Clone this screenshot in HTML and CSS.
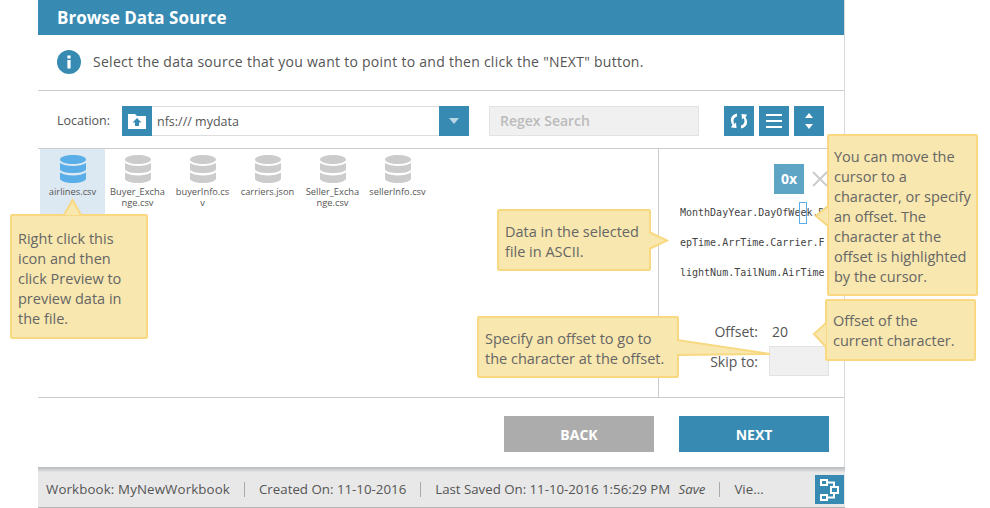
FILE: index.html
```html
<!DOCTYPE html>
<html lang="en">
<head>
<meta charset="utf-8">
<title>Browse Data Source</title>
<link rel="stylesheet" href="styles.css">
</head>
<body>
<div class="panel">
  <header class="title">Browse Data Source</header>
  <div class="intro">
    <svg class="info" viewBox="0 0 24 24" width="24" height="24"><circle cx="12" cy="12" r="12" fill="#378bb3"/><rect x="10.4" y="10" width="3.2" height="8.5" fill="#fff"/><rect x="10.4" y="5.5" width="3.2" height="3" fill="#fff"/></svg>
    <span>Select the data source that you want to point to and then click the "NEXT" button.</span>
  </div>
  <div class="toolbar">
    <span class="loc-label">Location:</span>
    <div class="loc">
      <span class="loc-icon"><svg viewBox="0 0 18 16" width="18" height="16"><path d="M0 1h7l2 2h9v13H0z" fill="#fff"/><path d="M9 5l4.500 4.500H11V13H7V9.500H4.500z" fill="#378bb3"/></svg></span>
      <span class="loc-text">nfs:/// mydata</span>
      <span class="loc-drop"><svg viewBox="0 0 10 6" width="10" height="6"><path d="M0 0h10L5 6z" fill="#b9d6e4"/></svg></span>
    </div>
    <div class="regex">Regex Search</div>
    <div class="tools">
      <span class="tool"><svg viewBox="0 0 20 18" width="20" height="18"><path d="M8 1.500C3.500 2.500 1.500 5.500 2 9c.2 1.500.8 2.500 1.500 3.500L2 15.500l5.500.5-.5-5.500-1.500 1.500C4.500 10.500 4.300 9 4.700 7.500 5.200 6 6.300 5 8 4.500zM12 16.500c4.500-1 6.500-4 6-7.500-.2-1.500-.8-2.500-1.500-3.500L18 2.500 12.500 2l.5 5.500L14.500 6c1 1.500 1.200 3 .8 4.500-.5 1.500-1.600 2.500-3.300 3z" fill="#fff"/></svg></span>
      <span class="tool"><svg viewBox="0 0 16 14" width="16" height="14"><path d="M0 0h16v2H0zM0 6h16v2H0zM0 12h16v2H0z" fill="#fff"/></svg></span>
      <span class="tool"><svg viewBox="0 0 8 16" width="8" height="16"><path d="M4 0l4 5H0zM4 16L0 11h8z" fill="#fff"/></svg></span>
    </div>
  </div>
  <div class="content">
    <div class="files">
      <div class="file selected"><svg class="db" viewBox="0 0 26 28"><path d="M0 4.500C0 2 6 0 13 0s13 2 13 4.500S20 9 13 9 0 7 0 4.500zM0 8c3 2 8 3 13 3s10-1 13-3v6c0 2.500-6 4-13 4S0 16.500 0 14zM0 17.500c3 2 8 3 13 3s10-1 13-3v6C26 26 20 28 13 28S0 26 0 23.500z"/></svg><span>airlines.csv</span></div>
      <div class="file"><svg class="db" viewBox="0 0 26 28"><path d="M0 4.500C0 2 6 0 13 0s13 2 13 4.500S20 9 13 9 0 7 0 4.500zM0 8c3 2 8 3 13 3s10-1 13-3v6c0 2.500-6 4-13 4S0 16.500 0 14zM0 17.500c3 2 8 3 13 3s10-1 13-3v6C26 26 20 28 13 28S0 26 0 23.500z"/></svg><span>Buyer_Excha<br>nge.csv</span></div>
      <div class="file"><svg class="db" viewBox="0 0 26 28"><path d="M0 4.500C0 2 6 0 13 0s13 2 13 4.500S20 9 13 9 0 7 0 4.500zM0 8c3 2 8 3 13 3s10-1 13-3v6c0 2.500-6 4-13 4S0 16.500 0 14zM0 17.500c3 2 8 3 13 3s10-1 13-3v6C26 26 20 28 13 28S0 26 0 23.500z"/></svg><span>buyerInfo.cs<br>v</span></div>
      <div class="file"><svg class="db" viewBox="0 0 26 28"><path d="M0 4.500C0 2 6 0 13 0s13 2 13 4.500S20 9 13 9 0 7 0 4.500zM0 8c3 2 8 3 13 3s10-1 13-3v6c0 2.500-6 4-13 4S0 16.500 0 14zM0 17.500c3 2 8 3 13 3s10-1 13-3v6C26 26 20 28 13 28S0 26 0 23.500z"/></svg><span>carriers.json</span></div>
      <div class="file"><svg class="db" viewBox="0 0 26 28"><path d="M0 4.500C0 2 6 0 13 0s13 2 13 4.500S20 9 13 9 0 7 0 4.500zM0 8c3 2 8 3 13 3s10-1 13-3v6c0 2.500-6 4-13 4S0 16.500 0 14zM0 17.500c3 2 8 3 13 3s10-1 13-3v6C26 26 20 28 13 28S0 26 0 23.500z"/></svg><span>Seller_Excha<br>nge.csv</span></div>
      <div class="file"><svg class="db" viewBox="0 0 26 28"><path d="M0 4.500C0 2 6 0 13 0s13 2 13 4.500S20 9 13 9 0 7 0 4.500zM0 8c3 2 8 3 13 3s10-1 13-3v6c0 2.500-6 4-13 4S0 16.500 0 14zM0 17.500c3 2 8 3 13 3s10-1 13-3v6C26 26 20 28 13 28S0 26 0 23.500z"/></svg><span>sellerInfo.csv</span></div>
    </div>
    <div class="preview">
      <div class="hex-row">
        <span class="hex">0x</span>
        <svg class="close" viewBox="0 0 16 16" width="16" height="16"><path d="M1 1l14 14M15 1L1 15" stroke="#ccc" stroke-width="2" fill="none"/></svg>
      </div>
      <div class="ascii">
        <div>MonthDayYear.DayOfWe<span class="cursor">e</span>k.D</div>
        <div>epTime.ArrTime.Carrier.F</div>
        <div>lightNum.TailNum.AirTime</div>
      </div>
      <div class="field"><span class="field-label">Offset:</span><span class="field-val">20</span></div>
      <div class="field skip"><span class="field-label">Skip to:</span><span class="skip-box"></span></div>
    </div>
  </div>
  <div class="actions">
    <button class="btn back">BACK</button>
    <button class="btn next">NEXT</button>
  </div>
</div>
<footer class="status">
  <span class="st st-book">Workbook: MyNewWorkbook</span>
  <span class="st st-made">Created On: 11-10-2016</span>
  <span class="st st-saved">Last Saved On: 11-10-2016 1:56:29 PM <em class="save">Save</em></span>
  <span class="st st-view">Vie...</span>
  <span class="graph"><svg viewBox="0 0 20 22" width="20" height="22"><g fill="none" stroke="#fff" stroke-width="2"><rect x="1" y="1" width="6" height="5"/><rect x="11" y="8" width="7" height="6"/><rect x="1" y="16" width="6" height="5"/><path d="M7 3.500h7V8M14 14v4.500H7"/></g></svg></span>
</footer>

<div class="note n1"><svg class="tail" width="17" height="17" viewBox="0 0 17 17"><path d="M0 16L8.500 1 17 16" /></svg>Right click this icon and then click Preview to preview data in the file.</div>
<div class="note n2"><svg class="tail" width="19" height="17" viewBox="0 0 19 17"><path d="M0 0l18 8.500L0 17" /></svg>Data in the selected file in ASCII.</div>
<div class="note n3"><svg class="tail" width="13" height="20" viewBox="0 0 13 20"><path d="M13 0L1 10l12 10" /></svg>You can move the cursor to a character, or specify an offset. The character at the offset is highlighted by the cursor.</div>
<div class="note n4"><svg class="tail" width="13" height="24" viewBox="0 0 13 24"><path d="M13 0L1 11l12 13" /></svg>Offset of the current character.</div>
<div class="note n5"><svg class="tail" width="94" height="16" viewBox="0 0 94 16"><path d="M0 0l93 14L0 15" /></svg>Specify an offset to go to the character at the offset.</div>
</body>
</html>
```

FILE: styles.css
```css
* { box-sizing: border-box; }
html, body { margin: 0; padding: 0; }
body {
  width: 990px;
  height: 508px;
  position: relative;
  overflow: hidden;
  background: #fff;
  font-family: "Open Sans", sans-serif;
  color: #555;
}
.panel {
  width: 807px;
  margin-left: 38px;
  height: 467px;
  border-right: 1px solid #d5d9dd;
  display: flex;
  flex-direction: column;
}
.title {
  height: 35px;
  background: #378bb3;
  color: #fff;
  font-size: 17px;
  font-weight: 700;
  line-height: 35px;
  padding-left: 19px;
}
.intro {
  height: 56px;
  display: flex;
  align-items: center;
  gap: 12px;
  padding: 0 0 2px 19px;
  font-size: 14px;
  letter-spacing: .27px;
  border-bottom: 1px solid #ccc;
}
.info { flex: none; }
.toolbar {
  height: 58px;
  display: flex;
  align-items: center;
  padding: 2px 15px 0 19px;
  border-bottom: 1px solid #ccc;
}
.loc-label { font-size: 12.500px; width: 65px; }
.loc {
  width: 347px;
  height: 30px;
  display: flex;
  align-items: center;
  border: 1px solid #ddd;
  border-width: 1px 0;
}
.loc-icon {
  width: 30px; height: 30px; background: #378bb3;
  display: flex; align-items: center; justify-content: center;
}
.loc-text { flex: 1; font-size: 12.500px; padding: 1px 0 0 5px; }
.loc-drop {
  width: 30px; height: 30px; background: #378bb3;
  display: flex; align-items: center; justify-content: center;
}
.regex {
  margin-left: 20px;
  width: 210px;
  height: 30px;
  background: #f0f0f0;
  border: 1px solid #e2e2e2;
  color: #bbb;
  font-size: 14px;
  font-weight: 600;
  line-height: 28px;
  padding-left: 10px;
}
.tools { display: flex; gap: 5px; margin-left: 25px; }
.tool {
  width: 30px; height: 30px; background: #378bb3;
  display: flex; align-items: center; justify-content: center;
}
.content {
  height: 249px;
  display: flex;
  border-bottom: 1px solid #ccc;
}
.files {
  flex: none;
  width: 621px;
  display: flex;
  align-items: flex-start;
  padding-left: 2px;
  border-right: 1px solid #ccc;
}
.file {
  width: 65px;
  height: 66px;
  display: flex;
  flex-direction: column;
  align-items: center;
  padding-top: 6px;
  font-size: 9.300px;
  line-height: 11px;
  text-align: center;
}
.file.selected { background: #dce8f2; }
.db { width: 26px; height: 28px; fill: #ccc; margin-bottom: 3px; flex: none; }
.selected .db { fill: #5aaee8; }
.preview { flex: 1; min-width: 0; padding: 0 0 0 21px; }
.hex-row { display: flex; align-items: center; gap: 8px; margin: 15px 0 0 94px; height: 30px; }
.hex {
  width: 30px; height: 30px; background: #5ea4c4; color: #fff;
  font-size: 14px; font-weight: 700; text-align: center; line-height: 30px; flex: none;
}
.close { flex: none; }
.ascii {
  margin-top: 4px;
  width: 144px;
  overflow: hidden;
  font-family: "DejaVu Sans Mono", monospace;
  font-size: 10px;
  line-height: 30px;
  color: #444;
  white-space: nowrap;
}
.cursor { position: relative; }
.cursor::after {
  content: "";
  position: absolute;
  left: -1px;
  right: -1px;
  top: -5px;
  bottom: -6px;
  border: 1px solid #5aaee8;
}
.field { display: flex; align-items: center; font-size: 14px; margin-top: 33px; height: 20px; }
.field-label { width: 78px; text-align: right; color: #555; }
.field-val { margin-left: 14px; }
.skip { margin-top: 5px; height: 30px; }
.skip-box { width: 60px; height: 30px; margin-left: 11px; background: #f0f0f0; border: 1px solid #e2e2e2; flex: none; }
.actions {
  flex: 1;
  display: flex;
  justify-content: flex-end;
  gap: 25px;
  padding: 18px 15px 0 0;
}
.btn {
  width: 150px; height: 36px; border: 0; color: #fff;
  font-family: inherit; font-size: 14px; font-weight: 700; padding: 0;
}
.back { background: #acacac; }
.next { background: #378bb3; }
.status {
  width: 807px;
  margin-left: 38px;
  height: 41px;
  background: linear-gradient(#b8bcbe, #d8d9da 4px, #e8e8e8 5px);
  border-bottom: 1px solid #b5b5b5;
  display: flex;
  align-items: center;
  padding: 5px 0 0 8px;
  font-size: 13.300px;
  color: #555;
  position: relative;
}
.st { padding-right: 14px; margin-right: 14px; border-right: 1px solid #aaa; line-height: 15px; }
.st-book { letter-spacing: .13px; }
.st-made { letter-spacing: 0; }
.st-saved { letter-spacing: -.03px; }
.st-view { border: 0; }
.save { margin-left: 5px; }
.graph {
  position: absolute; right: 1px; top: 8px;
  width: 29px; height: 29px; background: #378bb3;
  display: flex; align-items: center; justify-content: center;
}
.note {
  position: absolute;
  background: #f8e7ae;
  border: 2px solid #f8d981;
  border-radius: 2px;
  font-size: 14.500px;
  line-height: 20px;
  color: #666;
  padding: 5px 2px 5px 5px;
}
.tail { position: absolute; overflow: visible; fill: #f8e7ae; stroke: #f8d981; stroke-width: 2px; }
.n1 { left: 10px; top: 214px; width: 138px; height: 125px; padding: 13px 14px 0 6px; }
.n1 .tail { left: 52px; top: -17px; }
.n2 { left: 497px; top: 209px; width: 154px; height: 62px; padding-top: 11px; padding-left: 6px; }
.n2 .tail { left: 150px; top: 21px; }
.n3 { left: 827px; top: 134px; width: 151px; height: 162px; padding-top: 11px; }
.n3 .tail { left: -14px; top: 70px; }
.n4 { left: 825px; top: 299px; width: 151px; height: 62px; padding: 10px 15px 0 6px; }
.n4 .tail { left: -14px; top: 22px; }
.n5 { left: 477px; top: 316px; width: 202px; height: 62px; padding-top: 11px; padding-left: 6px; }
.n5 .tail { left: 198px; top: 22px; }
```
